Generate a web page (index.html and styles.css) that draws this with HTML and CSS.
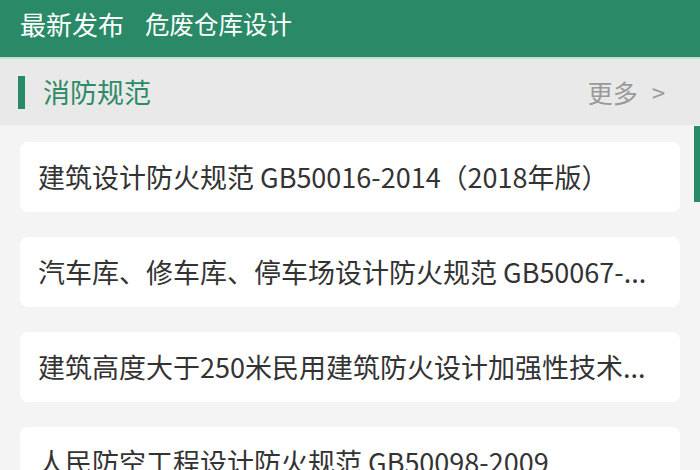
FILE: index.html
```html
<!DOCTYPE html>
<html lang="zh-CN">
<head>
<meta charset="utf-8">
<link rel="stylesheet" href="styles.css">
</head>
<body>
<header class="topbar">
  <span class="top-main">最新发布</span>
  <span class="top-sub">危废仓库设计</span>
</header>
<section class="section-head">
  <div class="title"><span class="bar"></span><span class="title-text">消防规范</span></div>
  <div class="more"><span>更多</span><span class="chev">&gt;</span></div>
</section>
<main class="list">
  <div class="card"><span class="card-text">建筑设计防火规范 GB50016-2014（2018年版）</span></div>
  <div class="card"><span class="card-text">汽车库、修车库、停车场设计防火规范 GB50067-...</span></div>
  <div class="card"><span class="card-text">建筑高度大于250米民用建筑防火设计加强性技术...</span></div>
  <div class="card"><span class="card-text">人民防空工程设计防火规范 GB50098-2009</span></div>
  <div class="scrollbar"></div>
</main>
</body>
</html>
```

FILE: styles.css
```css
* { box-sizing: border-box; }
html, body {
  margin: 0;
  padding: 0;
  width: 700px;
  height: 470px;
  overflow: hidden;
  background: #f4f4f4;
  font-family: "Noto Sans CJK SC", "Noto Sans", sans-serif;
}
.topbar {
  height: 59px;
  background: #2a8a67;
  border-bottom: 2px solid #bfe0d2;
  display: flex;
  align-items: center;
  padding: 0 0 10px 20px;
  color: #ffffff;
  gap: 21px;
}
.top-main { font-size: 26px; line-height: 1.3; }
.top-sub { font-size: 24.5px; line-height: 1.3; }
.section-head {
  height: 66px;
  background: #e9e9e9;
  display: flex;
  align-items: center;
  justify-content: space-between;
  padding: 0 35px 0 18px;
}
.title { display: flex; align-items: center; gap: 18px; }
.bar {
  width: 7px;
  height: 33px;
  background: #2a8a67;
}
.title-text {
  font-size: 27px;
  color: #2e8b67;
  line-height: 1.3;
}
.more {
  display: flex;
  align-items: center;
  gap: 14px;
  font-size: 25px;
  color: #9a9a9a;
  line-height: 1.3;
}
.chev { font-size: 24px; }
.list {
  position: relative;
  padding: 17px 20px 0 20px;
  display: flex;
  flex-direction: column;
  gap: 25px;
}
.card {
  height: 70px;
  background: #ffffff;
  border-radius: 8px;
  display: flex;
  align-items: center;
  padding: 0 18px;
  overflow: hidden;
  flex-shrink: 0;
}
.card-text {
  font-size: 27px;
  color: #333333;
  white-space: nowrap;
  overflow: hidden;
  text-overflow: ellipsis;
  line-height: 1.5;
}
.scrollbar {
  position: absolute;
  right: 0;
  top: 1px;
  width: 6px;
  height: 76px;
  background: #2a8a67;
}
```
